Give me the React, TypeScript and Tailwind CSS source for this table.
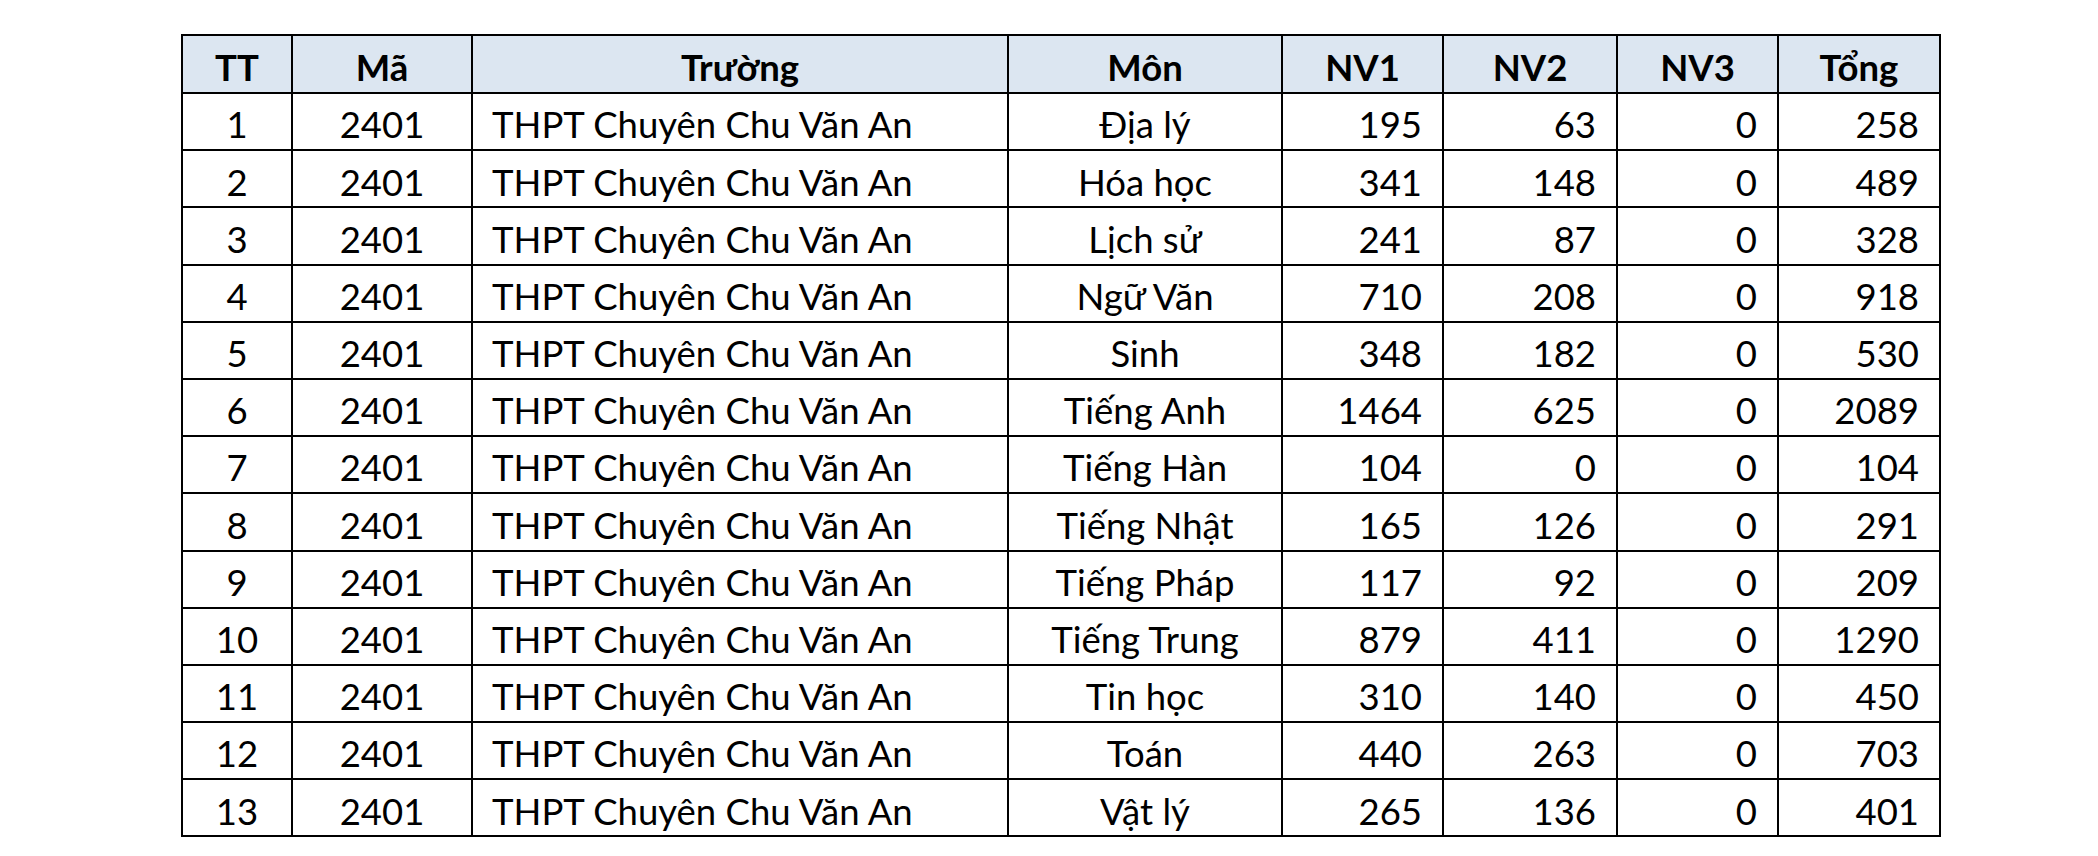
const rows: [string, string, number, number, number, number][] = [
  ["1", "Địa lý", 195, 63, 0, 258],
  ["2", "Hóa học", 341, 148, 0, 489],
  ["3", "Lịch sử", 241, 87, 0, 328],
  ["4", "Ngữ Văn", 710, 208, 0, 918],
  ["5", "Sinh", 348, 182, 0, 530],
  ["6", "Tiếng Anh", 1464, 625, 0, 2089],
  ["7", "Tiếng Hàn", 104, 0, 0, 104],
  ["8", "Tiếng Nhật", 165, 126, 0, 291],
  ["9", "Tiếng Pháp", 117, 92, 0, 209],
  ["10", "Tiếng Trung", 879, 411, 0, 1290],
  ["11", "Tin học", 310, 140, 0, 450],
  ["12", "Toán", 440, 263, 0, 703],
  ["13", "Vật lý", 265, 136, 0, 401],
];

const grid =
  "grid grid-cols-[108px_180px_536px_274px_161px_174px_161px_162px]";
const cell = "flex items-center pt-[6px] border-l-2 border-black";

export default function App() {
  return (
    <div
      className="w-[2098px] h-[856px] bg-white pt-[34px] pl-[181px] text-black"
      style={{ fontFamily: "Lato, 'Open Sans', sans-serif" }}
    >
      <div className="w-[1760px] border-2 border-black text-[36.5px] leading-none">
        {/* header */}
        <div className={`${grid} h-[56px] bg-[#dce6f1] font-bold`}>
          <div className="flex items-center justify-center pt-[6px]">TT</div>
          <div className={`${cell} justify-center`}>Mã</div>
          <div className={`${cell} justify-center`}>Trường</div>
          <div className={`${cell} justify-center`}>Môn</div>
          <div className={`${cell} justify-center`}>NV1</div>
          <div className={`${cell} justify-center`}>NV2</div>
          <div className={`${cell} justify-center`}>NV3</div>
          <div className={`${cell} justify-center`}>Tổng</div>
        </div>

        {rows.map(([tt, mon, nv1, nv2, nv3, tong]) => (
          <div key={tt} className={`${grid} h-[57.2px] border-t-2 border-black`}>
            <div className="flex items-center justify-center pt-[6px]">{tt}</div>
            <div className={`${cell} justify-center`}>2401</div>
            <div className={`${cell} pl-[19px]`}>THPT Chuyên Chu Văn An</div>
            <div className={`${cell} justify-center`}>{mon}</div>
            <div className={`${cell} justify-end pr-[20px]`}>{nv1}</div>
            <div className={`${cell} justify-end pr-[20px]`}>{nv2}</div>
            <div className={`${cell} justify-end pr-[20px]`}>{nv3}</div>
            <div className={`${cell} justify-end pr-[20px]`}>{tong}</div>
          </div>
        ))}
      </div>
    </div>
  );
}
